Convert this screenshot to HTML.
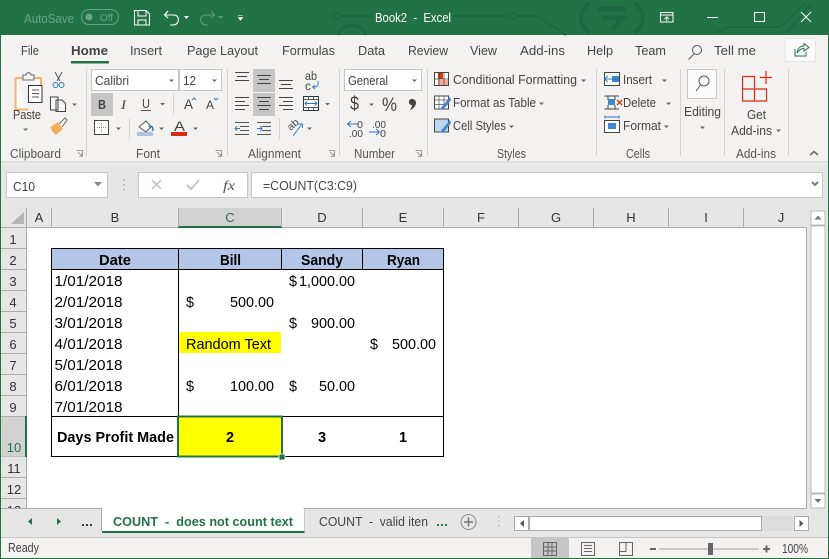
<!DOCTYPE html>
<html><head><meta charset="utf-8"><style>
html,body{margin:0;padding:0;width:829px;height:559px;overflow:hidden;background:#fff}
svg{display:block}
text{font-family:"Liberation Sans",sans-serif;font-size:13px;fill:#444;white-space:pre}
.c{font-size:14.500px;fill:#000}
.b{font-weight:bold}
.h{font-size:13px;fill:#333;text-anchor:middle}
.lb{fill:#555;font-size:12.500px}
.ic{fill:none;stroke:#555;stroke-width:1}
.car{fill:#666}
</style></head><body>
<svg width="829" height="559" viewBox="0 0 829 559" xmlns="http://www.w3.org/2000/svg">
<!-- base -->
<rect width="829" height="559" fill="#f3f2f1"/>
<rect width="829" height="35" fill="#217346"/>
<!-- title pattern -->
<g fill="none" stroke="#1c6840" stroke-width="2">
<circle cx="336" cy="16" r="3.500"/><path d="M340 16H372M454 16H509M517 16H537L566 35"/><circle cx="513" cy="16" r="3.500"/>
<path d="M338 35C342 22 362 22 366 35" stroke-width="3"/>
<path d="M590 3C578 10 578 25 590 33M634 3C646 10 646 25 634 33" stroke-width="4"/>
<path d="M598 9H626M602 18H622L612 30" stroke-width="5"/>
<path d="M716 33L728 27H780L806 3M786 33L812 3"/>
</g>
<!-- Title bar contents -->
<text x="24" y="23" textLength="50" lengthAdjust="spacingAndGlyphs" style="fill:#6aa286">AutoSave</text>
<rect x="81.500" y="9.500" width="37" height="15" rx="7.500" fill="none" stroke="#6aa286"/>
<circle cx="89" cy="17" r="3.500" fill="#6aa286"/>
<text x="100" y="21" textLength="13" lengthAdjust="spacingAndGlyphs" style="font-size:10.500px;fill:#6aa286">Off</text>
<path d="M134.500 10.500H146L149.500 14V25H134.500ZM138 10.500V16H146V10.500M138 25V20H146V25" fill="none" stroke="#fff"/>
<path d="M168 11L164.500 15L168 18M165 15H174C180 15 180 25 173 25H170" fill="none" stroke="#fff" stroke-width="1.100"/>
<path d="M184 16H189L186.500 19Z" fill="#fff"/>
<path d="M211 11L214.500 15L211 18M214 15H205C199 15 199 25 206 25H208" fill="none" stroke="#5f9a7a" stroke-width="1.100"/>
<path d="M218 16H223L220.500 19Z" fill="#5f9a7a"/>
<path d="M238 15.500H243M238 17.500H243L240.500 20.500Z" fill="#fff" stroke="#fff" stroke-width=".5"/>
<text x="375" y="22" textLength="76" lengthAdjust="spacingAndGlyphs" style="fill:#fff">Book2  -  Excel</text>
<path d="M660.500 12.500H673V22H660.500ZM660.500 15H673M666.800 21V17M664.500 19L666.800 16.800L669 19" fill="none" stroke="#fff"/>
<path d="M707 17.500H718" stroke="#fff"/>
<rect x="754.500" y="12.500" width="10" height="9" fill="none" stroke="#fff"/>
<path d="M801 12L811 22M811 12L801 22" stroke="#fff"/>
<!-- Tabs -->
<text x="21" y="55" textLength="18" lengthAdjust="spacingAndGlyphs">File</text>
<text x="71" y="55" textLength="37" lengthAdjust="spacingAndGlyphs" class="b" style="fill:#444">Home</text>
<rect x="71" y="61" width="38" height="2.500" fill="#217346"/>
<text x="130" y="55" textLength="32" lengthAdjust="spacingAndGlyphs">Insert</text>
<text x="187" y="55" textLength="71" lengthAdjust="spacingAndGlyphs">Page Layout</text>
<text x="282" y="55" textLength="53" lengthAdjust="spacingAndGlyphs">Formulas</text>
<text x="358" y="55" textLength="27" lengthAdjust="spacingAndGlyphs">Data</text>
<text x="408" y="55" textLength="40" lengthAdjust="spacingAndGlyphs">Review</text>
<text x="470" y="55" textLength="27" lengthAdjust="spacingAndGlyphs">View</text>
<text x="520" y="55" textLength="45" lengthAdjust="spacingAndGlyphs">Add-ins</text>
<text x="587" y="55" textLength="26" lengthAdjust="spacingAndGlyphs">Help</text>
<text x="635" y="55" textLength="31" lengthAdjust="spacingAndGlyphs">Team</text>
<circle cx="697" cy="50" r="4.500" class="ic"/><path d="M694 54L688.500 59.500" class="ic"/>
<text x="714" y="55" textLength="42" lengthAdjust="spacingAndGlyphs">Tell me</text>
<rect x="785" y="38.500" width="30.500" height="23" rx="1" fill="#fafafa" stroke="#e4e4e4"/>
<path d="M795 49V56H806V52M797 53C798 47 801 46 804 46V43.500L809 47.500L804 51V48.500C801 48.500 799 50 797 53Z" fill="none" stroke="#217346"/>
<!-- Ribbon separators -->
<g stroke="#d2d2d2"><path d="M86.500 69V156M227.500 69V156M339.500 69V156M427.500 69V156M596.500 69V156M680.500 69V156M724.500 69V156M788.500 69V156"/></g>
<!-- ribbon shadow -->
<rect y="161" width="829" height="6" fill="#e9e9e9"/>
<rect y="161" width="829" height="1.500" fill="#dadada"/>
<rect y="166" width="829" height="42" fill="#e6e6e6"/>
<!-- Clipboard -->
<path d="M15.500 78H41V86M15.500 78V109.500H28" fill="#fbfaf7" stroke="#eeb46e" stroke-width="2"/>
<path d="M23 78V75H26C26 72 31 72 31 75H34V80H23Z" fill="#f7f7f7" stroke="#666"/>
<rect x="28.500" y="85.500" width="13.500" height="17" fill="#fff" stroke="#333"/>
<path d="M32 90H39M32 93.500H39M32 97H39" stroke="#555"/>
<text x="13" y="119" textLength="28" lengthAdjust="spacingAndGlyphs">Paste</text>
<path d="M23 128.500H28L25.500 131Z" class="car"/>
<path d="M55 72L60 81M62 72L57 81" stroke="#555" fill="none"/><circle cx="55.500" cy="85" r="2.500" fill="none" stroke="#2b78c4"/><circle cx="61.500" cy="85" r="2.500" fill="none" stroke="#2b78c4"/>
<path d="M50.500 97H58V110H50.500ZM56 100H62L65.500 103.500V111.500H56V100Z" fill="#f8f8f8" stroke="#444"/>
<path d="M72 103.500H77L74.500 106Z" class="car"/>
<path d="M50.500 127L58 122L63 129L56 135L52 131Z" fill="#f0b05c"/><path d="M59 124L65 118L67 120L62 127" fill="#fff" stroke="#666"/>
<text x="10" y="158" textLength="51" lengthAdjust="spacingAndGlyphs" class="lb">Clipboard</text>
<path d="M76.500 150.500H82.500V156.500M78 152L82 156M79 156.500H82V153.500" fill="none" stroke="#888" stroke-width=".8"/>
<!-- Font -->
<rect x="91.500" y="69.500" width="87" height="21" fill="#fff" stroke="#c6c6c6"/>
<rect x="179.500" y="69.500" width="42" height="21" fill="#fff" stroke="#c6c6c6"/>
<text x="95" y="85" textLength="34" lengthAdjust="spacingAndGlyphs">Calibri</text>
<text x="183" y="85" textLength="13" lengthAdjust="spacingAndGlyphs">12</text>
<path d="M169 79.500H174L171.500 82Z" class="car"/><path d="M212 79.500H217L214.500 82Z" class="car"/>
<rect x="91" y="93" width="22" height="23" fill="#c6c6c6"/>
<text x="98" y="109" textLength="8" lengthAdjust="spacingAndGlyphs" class="b" style="font-size:13px">B</text>
<text x="121" y="109" textLength="5" lengthAdjust="spacingAndGlyphs" style="font-size:13px;font-style:italic;font-family:'Liberation Serif',serif">I</text>
<text x="142" y="108" textLength="8" lengthAdjust="spacingAndGlyphs" style="font-size:13px">U</text>
<path d="M141 110.500H151" stroke="#555"/>
<path d="M160 103H165L162.500 105.500Z" class="car"/>
<path d="M173.500 94V114" stroke="#d2d2d2"/>
<text x="184" y="109" textLength="9" lengthAdjust="spacingAndGlyphs" style="font-size:14px">A</text>
<path d="M192 100L194 98L196 100" fill="none" stroke="#2b78c4"/>
<text x="206" y="109" textLength="8" lengthAdjust="spacingAndGlyphs" style="font-size:12px">A</text>
<path d="M214 98L216 100L218 98" fill="none" stroke="#2b78c4"/>
<rect x="94.500" y="120.500" width="14" height="14" fill="#fff" stroke="#444"/>
<path d="M101.500 123V132M97 127.500H106" stroke="#888" stroke-dasharray="1 1"/>
<path d="M116 127.500H121L118.500 130Z" class="car"/>
<path d="M129.500 118V139" stroke="#d2d2d2"/>
<path d="M139 127L146 121L151 127L146 132Z" fill="#fff" stroke="#555"/><path d="M149 127C152 125 153 127 153 131" stroke="#2b78c4" stroke-width="1.500" fill="none"/>
<rect x="137" y="132" width="16" height="4" fill="#a9c4e6"/>
<path d="M159 127.500H164L161.500 130Z" class="car"/>
<text x="174" y="131" textLength="11" lengthAdjust="spacingAndGlyphs" style="font-size:14px">A</text>
<rect x="171" y="132" width="16" height="4" fill="#d82c0d"/>
<path d="M193 127.500H198L195.500 130Z" class="car"/>
<text x="136" y="158" textLength="24" lengthAdjust="spacingAndGlyphs" class="lb">Font</text>
<path d="M215.500 150.500H221.500V156.500M217 152L221 156M218 156.500H221V153.500" fill="none" stroke="#888" stroke-width=".8"/>
<!-- Alignment -->
<rect x="253" y="69" width="22" height="23" fill="#c6c6c6"/>
<rect x="253" y="93" width="22" height="23" fill="#c6c6c6"/>
<g stroke="#444" fill="none">
<path d="M235 72.500H249M237 76.500H247M235 80.500H249"/>
<path d="M257 75.500H271M259 79.500H269M257 83.500H271"/>
<path d="M279 80.500H293M281 84.500H291M279 88.500H293"/>
<path d="M235 97.500H249M235 101.500H245M235 105.500H249M235 109.500H245"/>
<path d="M257 97.500H271M259 101.500H269M257 105.500H271M259 109.500H269"/>
<path d="M279 97.500H293M283 101.500H293M279 105.500H293M283 109.500H293"/>
<path d="M235 122.500H249M240 126.500H249M240 130.500H249M235 134.500H249" stroke="#555"/>
<path d="M257 122.500H271M262 126.500H271M262 130.500H271M257 134.500H271" stroke="#555"/>
</g>
<path d="M235 128.500H240M237 126L235 128.500L237 131" fill="none" stroke="#2b78c4"/>
<path d="M257 128.500H262M260 126L262 128.500L260 131" fill="none" stroke="#2b78c4"/>
<text x="305" y="80" textLength="12" lengthAdjust="spacingAndGlyphs" style="font-size:11.500px">ab</text>
<text x="305" y="90" textLength="6" lengthAdjust="spacingAndGlyphs" style="font-size:11.500px">c</text>
<path d="M318 81V84C318 87 316 87 313 87M315 85L312.500 87L315 89" fill="none" stroke="#2b88d8"/>
<rect x="303.500" y="96.500" width="15" height="14" fill="#fff" stroke="#333"/>
<path d="M303.500 99.500H318.500M303.500 107.500H318.500M308.500 96.500V99.500M313.500 96.500V99.500M308.500 107.500V110.500M313.500 107.500V110.500" stroke="#555" fill="none"/>
<path d="M305 103.500H317M307 101.500L305 103.500L307 105.500M315 101.500L317 103.500L315 105.500" fill="none" stroke="#2b78c4"/>
<path d="M325 103H330L327.500 105.500Z" class="car"/>
<path d="M279.500 118V139" stroke="#d2d2d2"/>
<text x="288" y="132" textLength="12" lengthAdjust="spacingAndGlyphs" style="font-size:10px" transform="rotate(-42 288 128)">ab</text>
<path d="M293 136L302 124M298 124H302.500V128" fill="none" stroke="#2b88d8"/>
<path d="M307 127.500H312L309.500 130Z" class="car"/>
<text x="248" y="158" textLength="53" lengthAdjust="spacingAndGlyphs" class="lb">Alignment</text>
<path d="M328.500 150.500H334.500V156.500M330 152L334 156M331 156.500H334V153.500" fill="none" stroke="#888" stroke-width=".8"/>
<!-- Number -->
<rect x="344.500" y="69.500" width="77" height="21" fill="#fff" stroke="#c6c6c6"/>
<text x="348" y="85" textLength="40" lengthAdjust="spacingAndGlyphs">General</text>
<path d="M412 79.500H417L414.500 82Z" class="car"/>
<text x="350" y="110" textLength="9" lengthAdjust="spacingAndGlyphs" style="font-size:19px">$</text>
<path d="M369 103.500H374L371.500 106Z" class="car"/>
<text x="382" y="111" textLength="15" lengthAdjust="spacingAndGlyphs" style="font-size:19px">%</text>
<path d="M409 101.500C409 98 416 98 416 103C416 106 413 109 409.500 110.500C411 108.500 412 107 412 105C410 105 409 104 409 101.500Z" fill="#444"/>
<path d="M348 124H358M351 121L347.500 124L351 127" fill="none" stroke="#2b78c4"/>
<text x="357" y="128" textLength="6" lengthAdjust="spacingAndGlyphs" style="font-size:10.500px">0</text>
<text x="349" y="137" textLength="14" lengthAdjust="spacingAndGlyphs" style="font-size:10.500px">.00</text>
<text x="372" y="128" textLength="14" lengthAdjust="spacingAndGlyphs" style="font-size:10.500px">.00</text>
<path d="M369 132H379M376 129L379.500 132L376 135" fill="none" stroke="#2b78c4"/>
<text x="380" y="137" textLength="6" lengthAdjust="spacingAndGlyphs" style="font-size:10.500px">0</text>
<text x="354" y="158" textLength="41" lengthAdjust="spacingAndGlyphs" class="lb">Number</text>
<path d="M415.500 150.500H421.500V156.500M417 152L421 156M418 156.500H421V153.500" fill="none" stroke="#888" stroke-width=".8"/>
<!-- Styles -->
<rect x="434.500" y="72.500" width="14" height="13" fill="#fff" stroke="#444"/><rect x="438" y="73" width="5" height="6" fill="#d83b01"/><rect x="438" y="80" width="10" height="5" fill="#f4a79a"/><path d="M439 73V85M444 73V85M435 79H448" stroke="#444" stroke-width=".7"/>
<text x="453" y="84" textLength="124" lengthAdjust="spacingAndGlyphs">Conditional Formatting</text>
<path d="M581 79.500H586L583.500 82Z" class="car"/>
<rect x="434.500" y="96" width="14" height="13" fill="#fff" stroke="#444"/><path d="M439 96V109M444 96V109M435 100H448M435 104.500H448" stroke="#555" stroke-width=".7"/><path d="M440 109L450 97L451 100L443 110Z" fill="#3f86d0"/>
<text x="453" y="107" textLength="83" lengthAdjust="spacingAndGlyphs">Format as Table</text>
<path d="M539 102.500H544L541.500 105Z" class="car"/>
<rect x="434.500" y="119" width="14" height="13" fill="#bcd6f0" stroke="#444"/><path d="M440 132L450 120L451 123L443 133Z" fill="#3f86d0"/>
<text x="453" y="130" textLength="53" lengthAdjust="spacingAndGlyphs">Cell Styles</text>
<path d="M509 125.500H514L511.500 128Z" class="car"/>
<text x="497" y="158" textLength="29" lengthAdjust="spacingAndGlyphs" class="lb">Styles</text>
<!-- Cells -->
<rect x="604.500" y="72.500" width="15" height="13" fill="#fff" stroke="#444"/><rect x="612" y="76" width="7" height="6" fill="#3f86d0"/><path d="M616 79H605M608 76L604.500 79L608 82" stroke="#2b78c4" fill="none"/>
<text x="623" y="84" textLength="29" lengthAdjust="spacingAndGlyphs">Insert</text>
<path d="M662 79.500H667L664.500 82Z" class="car"/>
<path d="M604.500 96H619M604.500 109H619M608 96V100M615 96V100M608 105V109M615 105V109" stroke="#444" fill="none"/><rect x="608" y="99" width="7" height="6" fill="#3f86d0"/><path d="M617 100L622 105M622 100L617 105" stroke="#d83b01" stroke-width="1.300"/>
<text x="623" y="107" textLength="33" lengthAdjust="spacingAndGlyphs">Delete</text>
<path d="M666 102.500H671L668.500 105Z" class="car"/>
<path d="M605 117H619M605 115.500V118.500M619 115.500V118.500" stroke="#2b78c4" fill="none"/><rect x="604.500" y="120.500" width="15" height="12" fill="#fff" stroke="#444"/><rect x="608" y="123" width="8" height="6" fill="#3f86d0"/>
<text x="623" y="130" textLength="38" lengthAdjust="spacingAndGlyphs">Format</text>
<path d="M664 125.500H669L666.500 128Z" class="car"/>
<text x="626" y="158" textLength="24" lengthAdjust="spacingAndGlyphs" class="lb">Cells</text>
<!-- Editing -->
<rect x="687.500" y="69.500" width="29" height="29" fill="#fbfbfb" stroke="#c6c6c6"/>
<circle cx="704" cy="81" r="5" class="ic"/><path d="M700.500 85L696 91" class="ic"/>
<text x="684" y="116" textLength="37" lengthAdjust="spacingAndGlyphs">Editing</text>
<path d="M700 126.500H705L702.500 129Z" class="car"/>
<!-- Add-ins -->
<g fill="none" stroke="#e0290d" stroke-width="1.200"><path d="M742.500 76.500H754.500V101M742.500 76.500V101H766.500V89H742.500M754.500 89H766.500"/><path d="M760 77.500H772M766 71V84"/></g>
<text x="747" y="119" textLength="19" lengthAdjust="spacingAndGlyphs">Get</text>
<text x="731" y="135" textLength="41" lengthAdjust="spacingAndGlyphs">Add-ins</text>
<path d="M776 129.500H781L778.500 132Z" class="car"/>
<text x="736" y="158" textLength="40" lengthAdjust="spacingAndGlyphs" class="lb">Add-ins</text>
<path d="M810 155L814 151.500L818 155" fill="none" stroke="#666" stroke-width="1.500"/>
<!-- Formula bar -->
<rect x="6.500" y="172.500" width="101" height="25" fill="#fff" stroke="#c6c6c6"/>
<text x="13" y="191" textLength="22" lengthAdjust="spacingAndGlyphs">C10</text>
<path d="M94 182H102L98 186.500Z" fill="#888"/>
<path d="M123 179.500h1.500v1.500h-1.500zM123 184h1.500v1.500h-1.500zM123 189h1.500v1.500h-1.500z" fill="#aaa"/>
<rect x="138.500" y="172.500" width="109" height="25" fill="#fff" stroke="#c6c6c6"/>
<path d="M152 180L161 189M161 180L152 189" stroke="#c4c4c4" stroke-width="1.600"/>
<path d="M187 185L191 189L199 180" fill="none" stroke="#c4c4c4" stroke-width="2"/>
<text x="223" y="190" textLength="12" lengthAdjust="spacingAndGlyphs" style="font-family:'Liberation Serif',serif;font-style:italic;font-size:14px;fill:#555">fx</text>
<rect x="251.500" y="172.500" width="571" height="25" fill="#fff" stroke="#c6c6c6"/>
<text x="263" y="190" textLength="94" lengthAdjust="spacingAndGlyphs">=COUNT(C3:C9)</text>
<path d="M812 182L815 185L818 182" fill="none" stroke="#777" stroke-width="2"/>
<!-- Sheet white -->
<rect x="26" y="228" width="780" height="281" fill="#fff"/>
<!-- headers -->
<rect x="1" y="208" width="806" height="20" fill="#e6e6e6"/>
<rect x="1" y="228" width="25" height="281" fill="#e6e6e6"/>
<path d="M24 212V224H11Z" fill="#b4b4b4"/>
<rect x="178" y="208" width="103" height="19" fill="#d2d2d2"/>
<rect x="178" y="226" width="104" height="2" fill="#217346"/>
<path d="M1 227.500H178M282 227.500H806.500V509M26.500 228V508" stroke="#ababab" fill="none"/>
<g stroke="#ababab"><path d="M26.500 208V227M51.500 208V227M178.500 208V227M281.500 208V227M362.500 208V227M443.500 208V227M518.500 208V227M593.500 208V227M668.500 208V227M743.500 208V227"/>
<path d="M1 248.500H26M1 269.500H26M1 290.500H26M1 311.500H26M1 332.500H26M1 353.500H26M1 374.500H26M1 395.500H26M1 416.500H26M1 456.500H26M1 477.500H26M1 498.500H26"/></g>
<text class="h" x="39" y="222">A</text><text class="h" x="115" y="222">B</text><text class="h" x="230" y="222" style="fill:#217346">C</text><text class="h" x="322" y="222">D</text><text class="h" x="403" y="222">E</text><text class="h" x="481" y="222">F</text><text class="h" x="556" y="222">G</text><text class="h" x="631" y="222">H</text><text class="h" x="706" y="222">I</text><text class="h" x="781" y="222">J</text>
<text class="h" x="13" y="244">1</text><text class="h" x="13" y="265">2</text><text class="h" x="13" y="286">3</text><text class="h" x="13" y="307">4</text><text class="h" x="13" y="328">5</text><text class="h" x="13" y="349">6</text><text class="h" x="13" y="370">7</text><text class="h" x="13" y="391">8</text><text class="h" x="13" y="412">9</text>
<rect x="1" y="417" width="25" height="39.500" fill="#d2d2d2"/>
<rect x="25" y="416" width="2" height="41" fill="#217346"/>
<text class="h" x="14" y="452" style="fill:#217346">10</text><text class="h" x="14" y="473">11</text><text class="h" x="14" y="494">12</text><text class="h" x="14" y="515">13</text>
<!-- Table -->
<rect x="51" y="248" width="392" height="21" fill="#b4c6e7"/>
<rect x="179" y="332" width="102" height="21" fill="#ff0"/>
<rect x="179" y="417" width="102" height="39" fill="#ff0"/>
<g stroke="#000" fill="none"><rect x="51.500" y="248.500" width="392" height="208"/><path d="M51 269.500H444M51 416.500H444M178.500 249V457M281.500 249V270M362.500 249V270"/></g>
<g>
<text class="c b" x="99" y="265" textLength="32" lengthAdjust="spacingAndGlyphs">Date</text>
<text class="c b" x="220" y="265" textLength="21" lengthAdjust="spacingAndGlyphs">Bill</text>
<text class="c b" x="301" y="265" textLength="42" lengthAdjust="spacingAndGlyphs">Sandy</text>
<text class="c b" x="387" y="265" textLength="33" lengthAdjust="spacingAndGlyphs">Ryan</text>
<text class="c" x="54.500" y="286" textLength="68" lengthAdjust="spacingAndGlyphs">1/01/2018</text>
<text class="c" x="54.500" y="307" textLength="68" lengthAdjust="spacingAndGlyphs">2/01/2018</text>
<text class="c" x="54.500" y="328" textLength="68" lengthAdjust="spacingAndGlyphs">3/01/2018</text>
<text class="c" x="54.500" y="349" textLength="68" lengthAdjust="spacingAndGlyphs">4/01/2018</text>
<text class="c" x="54.500" y="370" textLength="68" lengthAdjust="spacingAndGlyphs">5/01/2018</text>
<text class="c" x="54.500" y="391" textLength="68" lengthAdjust="spacingAndGlyphs">6/01/2018</text>
<text class="c" x="54.500" y="412" textLength="68" lengthAdjust="spacingAndGlyphs">7/01/2018</text>
<text class="c b" x="57" y="442" textLength="117" lengthAdjust="spacingAndGlyphs">Days Profit Made</text>
<text class="c" x="289" y="286" textLength="8" lengthAdjust="spacingAndGlyphs">$</text>
<text class="c" x="299" y="286" textLength="56" lengthAdjust="spacingAndGlyphs">1,000.00</text>
<text class="c" x="186" y="307" textLength="8" lengthAdjust="spacingAndGlyphs">$</text>
<text class="c" x="230" y="307" textLength="44" lengthAdjust="spacingAndGlyphs">500.00</text>
<text class="c" x="289" y="328" textLength="8" lengthAdjust="spacingAndGlyphs">$</text>
<text class="c" x="311" y="328" textLength="44" lengthAdjust="spacingAndGlyphs">900.00</text>
<text class="c" x="186" y="349" textLength="85" lengthAdjust="spacingAndGlyphs">Random Text</text>
<text class="c" x="370" y="349" textLength="8" lengthAdjust="spacingAndGlyphs">$</text>
<text class="c" x="392" y="349" textLength="44" lengthAdjust="spacingAndGlyphs">500.00</text>
<text class="c" x="186" y="391" textLength="8" lengthAdjust="spacingAndGlyphs">$</text>
<text class="c" x="230" y="391" textLength="44" lengthAdjust="spacingAndGlyphs">100.00</text>
<text class="c" x="289" y="391" textLength="8" lengthAdjust="spacingAndGlyphs">$</text>
<text class="c" x="319" y="391" textLength="36" lengthAdjust="spacingAndGlyphs">50.00</text>
<text class="c b" x="226" y="442">2</text>
<text class="c b" x="318" y="442">3</text>
<text class="c b" x="399" y="442">1</text>
</g>
<!-- selection -->
<rect x="178" y="416.500" width="104" height="40" fill="none" stroke="#217346" stroke-width="2"/>
<rect x="279" y="454" width="6" height="6" fill="#217346" stroke="#fff" stroke-width=".8"/>
<!-- V scrollbar -->
<rect x="807" y="208" width="21" height="301" fill="#e6e6e6"/>
<rect x="811" y="211" width="14" height="14" fill="#fff" stroke="#ababab" stroke-width=".8"/>
<path d="M814.500 219.500H821.500L818 215.500Z" fill="#777"/>
<rect x="811" y="226" width="14" height="267" fill="#fff" stroke="#ababab" stroke-width=".8"/>
<rect x="811" y="494" width="14" height="14" fill="#fff" stroke="#ababab" stroke-width=".8"/>
<path d="M814.500 499H821.500L818 503Z" fill="#777"/>
<!-- Sheet tabs -->
<rect x="1" y="509" width="827" height="28" fill="#e6e6e6"/>
<path d="M1 508.500H101.500V531M304 531V508.500H806.500" fill="none" stroke="#ababab"/>
<rect x="102" y="509" width="202" height="23" fill="#fff"/>
<path d="M102 532H304.500" stroke="#217346" stroke-width="2"/>
<path d="M32 518V525L28 521.500Z" fill="#217346"/>
<path d="M57 518V525L61 521.500Z" fill="#217346"/>
<text x="81" y="526" textLength="12" lengthAdjust="spacingAndGlyphs" class="b" style="fill:#333">...</text>
<text x="113" y="526" textLength="180" lengthAdjust="spacingAndGlyphs" class="b" style="fill:#217346">COUNT  -  does not count text</text>
<text x="319" y="526" textLength="109" lengthAdjust="spacingAndGlyphs">COUNT  -  valid iten</text>
<text x="436" y="526" textLength="12" lengthAdjust="spacingAndGlyphs" class="b" style="fill:#217346">...</text>
<circle cx="468.500" cy="522" r="7.500" fill="none" stroke="#8a8a8a"/>
<path d="M464 522H473M468.500 517.500V526.500" stroke="#777" stroke-width="1.500"/>
<path d="M498 516h1.500v1.500h-1.500zM498 520.500h1.500v1.500h-1.500zM498 525h1.500v1.500h-1.500z" fill="#b5b5b5"/>
<rect x="514.500" y="516.500" width="14" height="14" fill="#fff" stroke="#ababab"/>
<path d="M524 520V527L520 523.500Z" fill="#555"/>
<rect x="529.500" y="516.500" width="232" height="14" fill="#fff" stroke="#ababab"/>
<rect x="762" y="516" width="31" height="15" fill="#dcdcdc"/>
<rect x="794.500" y="516.500" width="14" height="14" fill="#fff" stroke="#ababab"/>
<path d="M799.500 520V527L803.500 523.500Z" fill="#555"/>
<!-- status -->
<rect x="1" y="537" width="827" height="21" fill="#f3f2f1"/>
<path d="M1 537.500H828" stroke="#c6c6c6"/>
<rect x="531" y="538" width="38" height="20" fill="#c6c6c6"/>
<path d="M543.500 542.500H556.500V555.500H543.500ZM548 542.500V555.500M552 542.500V555.500M543.500 547H556.500M543.500 551H556.500" fill="none" stroke="#666"/>
<rect x="581.500" y="542.500" width="13" height="13" fill="none" stroke="#666"/><path d="M584 545.500H592M584 548.500H592M584 551.500H592" stroke="#666"/>
<path d="M619.500 542.500H632.500V555.500H619.500ZM619.500 551.500H626V542.500" fill="none" stroke="#666"/>
<text x="8" y="552" textLength="31" lengthAdjust="spacingAndGlyphs" style="font-size:12.500px">Ready</text>
<rect x="650" y="548" width="6" height="2" fill="#666"/>
<rect x="659" y="548.500" width="100" height="1" fill="#a0a0a0"/>
<rect x="708" y="543" width="5" height="12" fill="#666"/>
<path d="M763 549H770M766.500 545.500V552.500" stroke="#666" stroke-width="2"/>
<text x="782" y="553" textLength="26" lengthAdjust="spacingAndGlyphs" style="font-size:12.500px">100%</text>
<!-- window frame -->
<path d="M.5 35V559M828.500 35V559M0 558.500H829" stroke="#217346" fill="none"/>
</svg>
</body></html>
